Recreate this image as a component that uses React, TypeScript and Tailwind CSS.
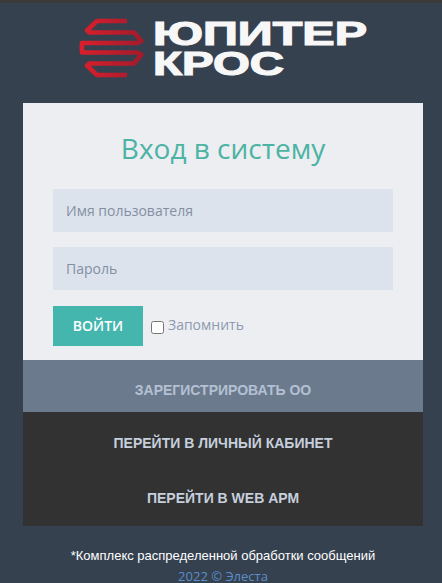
const LogoMark = () => (
  <svg width="66" height="60" viewBox="0 0 66 60" className="shrink-0">
    <defs>
      <linearGradient id="logoRed" gradientUnits="userSpaceOnUse" x1="0" y1="0" x2="66" y2="0">
        <stop offset="0" stopColor="#dc1f2b" />
        <stop offset="1" stopColor="#a01b2c" />
      </linearGradient>
    </defs>
    <path
      d="M48 3 H18 L8 12.5 L10.5 14.5 H55 L62.5 23 L58.5 25 H3 V34.5 H58.5 L62.5 36.5 L55 45.5 H10.5 L8 47.5 L18 57 H48"
      fill="none"
      stroke="url(#logoRed)"
      strokeWidth="4.6"
      strokeLinejoin="round"
    />
  </svg>
);

const LogoText = () => (
  <svg width="220" height="74" viewBox="0 0 220 74" className="shrink-0 -mt-[6px]">
    <g
      fill="#f7f7f8"
      stroke="#f7f7f8"
      strokeWidth="1.2"
      style={{ fontFamily: '"Liberation Sans", sans-serif', fontWeight: 700, fontSize: 33 }}
    >
      <text x="0" y="33" textLength="214" lengthAdjust="spacingAndGlyphs">
        ЮПИТЕР
      </text>
      <text x="0" y="63" textLength="131" lengthAdjust="spacingAndGlyphs">
        КРОС
      </text>
    </g>
  </svg>
);

const LinkRow = ({ label, className }: { label: string; className: string }) => (
  <a
    href="#"
    className={`block text-center font-bold text-[14px] font-['Liberation_Sans',sans-serif] ${className}`}
  >
    {label}
  </a>
);

export default function App() {
  return (
    <div className="h-[583px] overflow-hidden bg-[#364150] border-t-[3px] border-[#3a3a3a] font-['Open_Sans',sans-serif]">
      <div className="flex items-start gap-[8px] pl-[79px] pt-[15px] h-[100px]">
        <LogoMark />
        <LogoText />
      </div>

      <div className="mx-[23px] w-[400px]">
        <div className="bg-[#eceef2] px-[30px] pt-[26px] h-[257px]">
          <h3 className="text-[28px] leading-[38px] text-center text-[#4db3a4] mb-[22px]">Вход в систему</h3>
          <input
            placeholder="Имя пользователя"
            className="block w-full h-[43px] px-[13px] mb-[15px] bg-[#dde3ec] text-[14px] placeholder:text-[#8290a3] outline-none"
          />
          <input
            placeholder="Пароль"
            className="block w-full h-[43px] px-[13px] mb-[16px] bg-[#dde3ec] text-[14px] placeholder:text-[#8290a3] outline-none"
          />
          <div className="flex items-center">
            <button className="w-[90px] h-[40px] bg-[#44b6ae] text-white text-sm font-semibold">ВОЙТИ</button>
            <input type="checkbox" className="ml-[8px] mt-[3px] w-[13px] h-[13px]" />
            <label className="ml-[4px] -mt-[2px] text-sm text-[#8e9aaf]">Запомнить</label>
          </div>
        </div>
        <LinkRow label="ЗАРЕГИСТРИРОВАТЬ ОО" className="bg-[#6c7a8d] text-[#b4c0d3] pt-[20px] h-[52px]" />
        <div className="bg-[#323232] h-[114px] pt-[21px]">
          <LinkRow label="ПЕРЕЙТИ В ЛИЧНЫЙ КАБИНЕТ" className="text-[#c6cfdd]" />
          <LinkRow label="ПЕРЕЙТИ В WEB АРМ" className="text-[#c6cfdd] mt-[34px]" />
        </div>
      </div>

      <div className="pt-[20px] pl-[4px] text-center text-[13px] leading-[20px] font-['Liberation_Sans',sans-serif] text-white">
        *Комплекс распределенной обработки сообщений
      </div>
      <div className="pl-[4px] text-center text-[13px] leading-[20px] text-[#5b8fc7] font-['Open_Sans',sans-serif]">2022 © Элеста</div>
    </div>
  );
}
